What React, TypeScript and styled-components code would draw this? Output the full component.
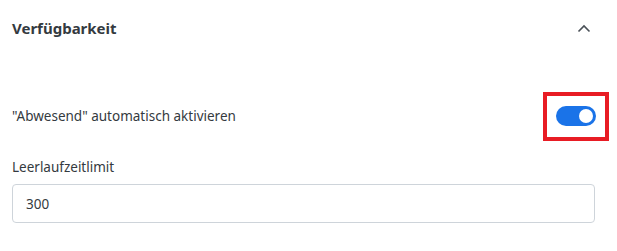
import React from "react";
import styled, { createGlobalStyle } from "styled-components";

const Global = createGlobalStyle`
  html, body { margin: 0; padding: 0; background: #fff; }
  body { font-family: "Noto Sans", "Open Sans", sans-serif; color: #343a40; }
`;

const Panel = styled.div`
  width: 617px;
  padding: 0 22px 0 12px;
  box-sizing: border-box;
`;

const Header = styled.div`
  height: 56px;
  display: flex;
  align-items: center;
  justify-content: space-between;
`;

const Title = styled.h3`
  margin: 0;
  font-size: 15px;
  font-weight: 700;
  color: #343a40;
`;

const ChevronButton = styled.button`
  border: 0;
  background: none;
  padding: 0;
  width: 16px;
  height: 16px;
  margin-right: 3px;
  display: flex;
  align-items: center;
  justify-content: center;
  color: #495057;
`;

const Row = styled.div`
  margin-top: 35px;
  display: flex;
  align-items: center;
  justify-content: space-between;
  height: 50px;
`;

const RowLabel = styled.span`
  font-size: 13.5px;
  color: #343a40;
`;

const Highlight = styled.div`
  border: 4px solid #e81c24;
  width: 58px;
  height: 41px;
  display: flex;
  align-items: center;
  justify-content: center;
  margin-right: -14px;
`;

const Switch = styled.div<{ $on: boolean }>`
  width: 40px;
  height: 20px;
  border-radius: 10px;
  background: ${(p) => (p.$on ? "#1a73e8" : "#ced4da")};
  position: relative;
`;

const Knob = styled.span<{ $on: boolean }>`
  position: absolute;
  top: 3px;
  left: ${(p) => (p.$on ? "23px" : "3px")};
  width: 14px;
  height: 14px;
  border-radius: 50%;
  background: #fff;
`;

const FieldLabel = styled.div`
  margin-top: 16px;
  font-size: 13.5px;
  color: #343a40;
  line-height: 20px;
`;

const Input = styled.input`
  display: block;
  margin-top: 7px;
  width: 100%;
  height: 39px;
  box-sizing: border-box;
  border: 1.5px solid #ced4da;
  border-radius: 4px;
  padding: 0 13px;
  font-family: inherit;
  font-size: 13.5px;
  color: #343a40;
  outline: none;
`;

export default function App() {
  return (
    <>
      <Global />
      <Panel>
        <Header>
          <Title>Verfügbarkeit</Title>
          <ChevronButton aria-label="collapse">
            <svg width="14" height="9" viewBox="0 0 14 9" fill="none">
              <path d="M1.5 7.5 L7 2 L12.5 7.5" stroke="#495057" strokeWidth="1.6" />
            </svg>
          </ChevronButton>
        </Header>
        <Row>
          <RowLabel>"Abwesend" automatisch aktivieren</RowLabel>
          <Highlight>
            <Switch $on>
              <Knob $on />
            </Switch>
          </Highlight>
        </Row>
        <FieldLabel>Leerlaufzeitlimit</FieldLabel>
        <Input defaultValue="300" />
      </Panel>
    </>
  );
}
